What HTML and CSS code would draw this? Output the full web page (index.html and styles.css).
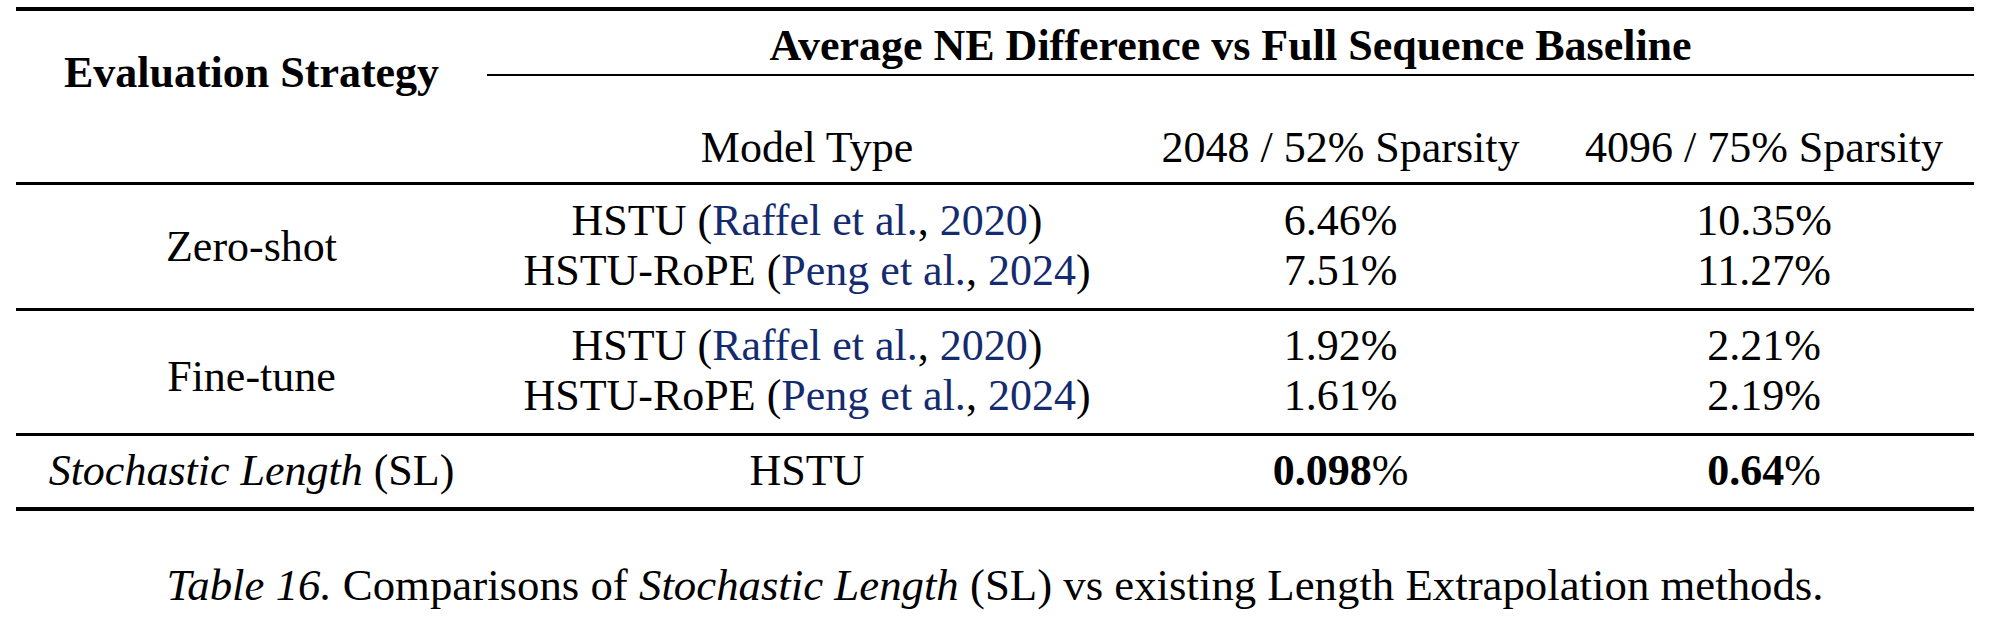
FILE: index.html
```html
<!DOCTYPE html>
<html lang="en">
<head>
<meta charset="utf-8">
<title>Table 16</title>
<link rel="stylesheet" href="styles.css">
</head>
<body>
<table class="results">
  <colgroup>
    <col class="c-strategy">
    <col class="c-model">
    <col class="c-v1">
    <col class="c-v2">
  </colgroup>
  <thead>
    <tr class="head-top">
      <th rowspan="2" class="strategy-head">Evaluation Strategy</th>
      <th colspan="3" class="group-head">Average NE Difference vs Full Sequence Baseline</th>
    </tr>
    <tr class="head-sub">
      <th>Model Type</th>
      <th>2048 / 52% Sparsity</th>
      <th>4096 / 75% Sparsity</th>
    </tr>
  </thead>
  <tbody class="group">
    <tr class="row-first">
      <td rowspan="2" class="strategy">Zero-shot</td>
      <td>HSTU (<span class="cite">Raffel et al.</span>, <span class="cite">2020</span>)</td>
      <td>6.46%</td>
      <td>10.35%</td>
    </tr>
    <tr class="row-last">
      <td>HSTU-RoPE (<span class="cite">Peng et al.</span>, <span class="cite">2024</span>)</td>
      <td>7.51%</td>
      <td>11.27%</td>
    </tr>
  </tbody>
  <tbody class="group">
    <tr class="row-first">
      <td rowspan="2" class="strategy">Fine-tune</td>
      <td>HSTU (<span class="cite">Raffel et al.</span>, <span class="cite">2020</span>)</td>
      <td>1.92%</td>
      <td>2.21%</td>
    </tr>
    <tr class="row-last">
      <td>HSTU-RoPE (<span class="cite">Peng et al.</span>, <span class="cite">2024</span>)</td>
      <td>1.61%</td>
      <td>2.19%</td>
    </tr>
  </tbody>
  <tbody class="group single">
    <tr class="row-first row-last">
      <td><em>Stochastic Length</em> (SL)</td>
      <td>HSTU</td>
      <td><b>0.098</b>%</td>
      <td><b>0.64</b>%</td>
    </tr>
  </tbody>
  <caption class="caption"><em>Table 16.</em> Comparisons of <em>Stochastic Length</em> (SL) vs existing Length Extrapolation methods.</caption>
</table>
</body>
</html>
```

FILE: styles.css
```css
html, body {
  margin: 0;
  padding: 0;
  background: #ffffff;
}

body {
  font-family: "Liberation Serif", "Times New Roman", serif;
  font-size: 44px;
  color: #000000;
}

.results {
  margin: 7px 0 0 16px;
  width: 1958px;
  table-layout: fixed;
  border-collapse: separate;
  border-spacing: 0;
  border-top: 4px solid #000;
  border-bottom: 4px solid #000;
}

.c-strategy { width: 471px; }
.c-model { width: 640px; }
.c-v1 { width: 427px; }
.c-v2 { width: 420px; }

.results th,
.results td {
  padding: 0;
  text-align: center;
  line-height: 50px;
  white-space: nowrap;
  vertical-align: top;
}

.strategy-head {
  font-weight: bold;
  padding-top: 37px !important;
  border-bottom: 3px solid #000;
}

.group-head {
  font-weight: bold;
  padding-top: 10px !important;
  padding-bottom: 3px !important;
  border-bottom: 2px solid #000;
}

.head-sub th {
  font-weight: normal;
  padding-top: 47px !important;
  padding-bottom: 9px !important;
  border-bottom: 3px solid #000;
}

.row-first td {
  padding-top: 11px;
}

.group + .group .row-first td {
  border-top: 3px solid #000;
  padding-top: 10px;
}

.row-last td {
  padding-bottom: 12px;
}

.single .row-last td {
  padding-bottom: 11px;
}

.results td.strategy {
  vertical-align: middle;
  padding-top: 0;
  padding-bottom: 0;
}

.cite {
  color: #142b6f;
}

.caption {
  caption-side: bottom;
  padding-top: 49px;
  font-size: 44.8px;
  line-height: 50px;
  text-align: center;
  white-space: nowrap;
}
```
